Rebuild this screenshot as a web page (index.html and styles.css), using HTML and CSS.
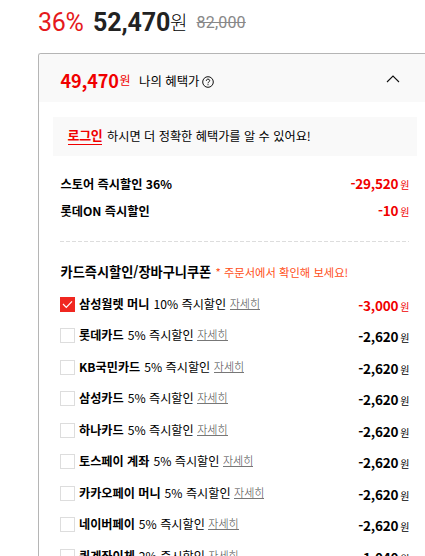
FILE: index.html
```html
<!DOCTYPE html>
<html lang="ko">
<head>
<meta charset="utf-8">
<title>나의 혜택가</title>
<link rel="stylesheet" href="styles.css">
</head>
<body>
<div class="price"><span class="rate">36%</span><strong class="final">52,470</strong><span class="unit">원</span><del class="origin">82,000</del></div>
<section class="benefit">
  <header class="head">
    <strong class="my-price">49,470</strong><span class="my-won">원</span><span class="my-label">나의 혜택가</span>
    <svg class="help" viewBox="0 0 12 12" fill="none" stroke="#111"><circle cx="6" cy="6" r="5.3"/><path d="M4.3 4.8C4.3 2.5 7.7 2.6 7.7 4.7C7.7 5.9 6 5.8 6 7.3M6 8.2V9.2"/></svg>
    <svg class="arrow" viewBox="0 0 14 8" fill="none" stroke="#111" stroke-width="1.1"><path d="M1 7L7 1L13 7"/></svg>
  </header>
  <p class="login"><a class="login-link">로그인</a><span class="login-text">하시면 더 정확한 혜택가를 알 수 있어요!</span></p>
  <div class="discounts">
    <div class="discount"><b>스토어 즉시할인 36%</b><span class="amount red">-29,520<i>원</i></span></div>
    <div class="discount"><b>롯데ON 즉시할인</b><span class="amount red">-10<i>원</i></span></div>
  </div>
  <div class="divider"></div>
  <div class="title"><h2>카드즉시할인/장바구니쿠폰</h2><span class="note">* 주문서에서 확인해 보세요!</span></div>
  <ul class="cards">
    <li><span class="box checked"><svg viewBox="0 0 15 15" fill="none" stroke="#fff" stroke-width="1.2"><path d="M3 7L6.3 10.3L12 4.3"/></svg></span><b>삼성월렛 머니</b><span class="desc">10% 즉시할인</span><a class="more">자세히</a><span class="amount red">-3,000<i>원</i></span></li>
    <li><span class="box"></span><b>롯데카드</b><span class="desc">5% 즉시할인</span><a class="more">자세히</a><span class="amount">-2,620<i>원</i></span></li>
    <li><span class="box"></span><b>KB국민카드</b><span class="desc">5% 즉시할인</span><a class="more">자세히</a><span class="amount">-2,620<i>원</i></span></li>
    <li><span class="box"></span><b>삼성카드</b><span class="desc">5% 즉시할인</span><a class="more">자세히</a><span class="amount">-2,620<i>원</i></span></li>
    <li><span class="box"></span><b>하나카드</b><span class="desc">5% 즉시할인</span><a class="more">자세히</a><span class="amount">-2,620<i>원</i></span></li>
    <li><span class="box"></span><b>토스페이 계좌</b><span class="desc">5% 즉시할인</span><a class="more">자세히</a><span class="amount">-2,620<i>원</i></span></li>
    <li><span class="box"></span><b>카카오페이 머니</b><span class="desc">5% 즉시할인</span><a class="more">자세히</a><span class="amount">-2,620<i>원</i></span></li>
    <li><span class="box"></span><b>네이버페이</b><span class="desc">5% 즉시할인</span><a class="more">자세히</a><span class="amount">-2,620<i>원</i></span></li>
    <li><span class="box"></span><b>퀵계좌이체</b><span class="desc">2% 즉시할인</span><a class="more">자세히</a><span class="amount">-1,040<i>원</i></span></li>
  </ul>
</section>
</body>
</html>
```
FILE: styles.css
```css
* { box-sizing: border-box; }
html, body { height: 556px; overflow: hidden; }
body {
  margin: 0;
  background: #fff;
  color: #000;
  font: 13px/20px "Noto Sans CJK KR", sans-serif;
}
b, strong, h2 { font-weight: 700; }
i { font-style: normal; }

.price {
  display: flex;
  align-items: center;
  height: 53px;
  padding: 0 0 7px 38px;
  white-space: nowrap;
}
.rate { width: 55px; font: 400 25px/30px Roboto, sans-serif; letter-spacing: -.3px; color: #e5191c; }
.final { width: 77px; font: 700 25px/30px Roboto, sans-serif; letter-spacing: -.1px; color: #222; }
.unit { width: 26.5px; margin-top: -2px; font-size: 19px; font-weight: 300; color: #000; }
.origin { font: 400 16px/20px Roboto, sans-serif; letter-spacing: .2px; color: #888; }

.benefit {
  width: 400px;
  height: 503px;
  margin-left: 38px;
  overflow: hidden;
  border: 1px solid #b5b5b5;
  border-width: 1px 0 0 1px;
  border-radius: 3px 0 0 0;
}
.head {
  display: flex;
  align-items: center;
  height: 48px;
  padding: 4px 0 0 21.5px;
  background: #f9f9f9;
}
.my-price { width: 59px; font-size: 18px; letter-spacing: -.1px; color: #f00000; }
.my-won { width: 19.5px; margin-top: -1px; font-size: 12px; color: #f00000; }
.my-label { width: 63px; margin-top: 2px; font-size: 12.4px; white-space: nowrap; }
.help { width: 12px; height: 12px; margin-top: 4px; }
.arrow { width: 14px; height: 8px; margin: -3px 0 0 172px; }

.login {
  display: flex;
  align-items: center;
  width: 364px;
  height: 39px;
  margin: 15px 0 0 14px;
  padding-left: 14.5px;
  background: #f9f9f9;
}
.login-link { width: 34.5px; margin: -2px 5px 0 0; border-bottom: 1px solid #f00000; line-height: 18px; font-weight: 700; letter-spacing: -.3px; color: #f00000; white-space: nowrap; }
.login-text { margin-top: -1px; font-size: 12.2px; white-space: nowrap; }

.discounts { width: 349px; margin: 14px 0 0 21.5px; }
.discount { display: flex; align-items: center; height: 27px; font-size: 12.2px; }
.amount { margin-left: auto; font-size: 13.5px; font-weight: 700; letter-spacing: -.2px; }
.amount i { margin-left: 2px; font-size: 10px; font-weight: 400; letter-spacing: 0; }
.red { color: #f00000; }

.divider {
  width: 349px;
  height: 1px;
  margin: 17px 0 0 21px;
  background: repeating-linear-gradient(90deg, #ddd 0 4px, transparent 4px 6px);
}
.title { display: flex; align-items: center; height: 20px; margin: 20px 0 0 21.5px; white-space: nowrap; }
h2 { width: 155px; margin: 0; font-size: 13.2px; line-height: 20px; }
.note { font-size: 11.3px; color: #ff4e17; }

.cards { width: 349.5px; margin: 6.5px 0 0 21px; padding: 0; list-style: none; }
.cards li { display: flex; align-items: center; height: 31.5px; white-space: nowrap; font-size: 12.15px; }
.cards b, .desc { margin-top: -1px; }
.cards .amount { margin-top: 3px; }
.box { width: 15px; height: 15px; margin-right: 4px; border: 1px solid #ddd; }
.checked { border: 0; background: #f02720; }
.checked svg { display: block; }
.desc { margin-left: 4px; }
.more { margin: -2px 0 0 3.5px; border-bottom: 1px solid #777; font-size: 11px; line-height: 12px; font-weight: 300; color: #444; }
```
